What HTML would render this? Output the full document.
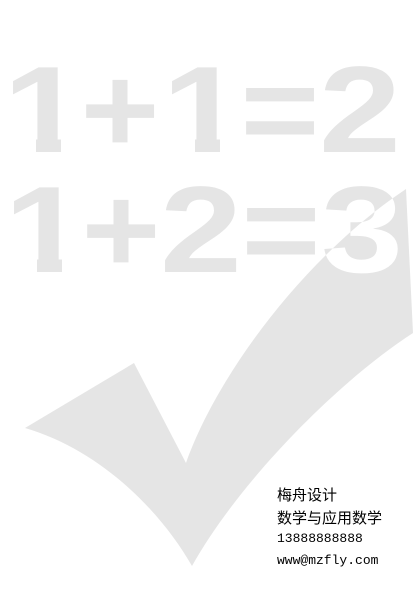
<!DOCTYPE html>
<html><head><meta charset="utf-8"><style>
html,body{margin:0;padding:0;background:#fff;}
body{width:420px;height:600px;position:relative;overflow:hidden;}
svg{position:absolute;left:0;top:0;}
svg text{font-family:"Liberation Sans",Arial,sans-serif;font-weight:bold;font-size:123px;}
.t{position:absolute;left:277px;color:#000;white-space:nowrap;}
.c{font-family:"Liberation Sans","Noto Sans CJK SC",sans-serif;font-size:15px;}
.m{font-family:"Liberation Mono",monospace;font-size:13px;}
</style></head><body>
<svg width="420" height="600" viewBox="0 0 420 600">
<defs>
<clipPath id="ck"><path d="M25,428 L134,363 L186,463 C215,380 300,260 406,189 L413,333 C340,380 240,480 192,566 C160,510 100,450 25,428 Z"/></clipPath>
<clipPath id="o1"><path d="M8,55 L61,55 L61,153 L36,153 L36,115 L8,115 Z"/></clipPath>
<clipPath id="o2"><path d="M168,55 L220,55 L220,153 L195,153 L195,115 L168,115 Z"/></clipPath>
<clipPath id="o3"><path d="M9,175 L62,175 L62,273 L37,273 L37,235 L9,235 Z"/></clipPath>
</defs>
<g fill="#e5e5e5" text-anchor="middle">
<g clip-path="url(#o1)"><text transform="translate(44,152) scale(1.2,1)">1</text></g>
<text transform="translate(120,152) scale(1.1,1)">+</text>
<g clip-path="url(#o2)"><text transform="translate(203,152) scale(1.2,1)">1</text></g>
<text transform="translate(280,152) scale(1.1,1)">=</text>
<text transform="translate(360,152) scale(1.2,1)">2</text>
<g clip-path="url(#o3)"><text transform="translate(45,272) scale(1.2,1)">1</text></g>
<text transform="translate(121,272) scale(1.1,1)">+</text>
<text transform="translate(201,272) scale(1.2,1)">2</text>
<text transform="translate(281,272) scale(1.1,1)">=</text>
<text transform="translate(362,272) scale(1.2,1)">3</text>
</g>
<path d="M25,428 L134,363 L186,463 C215,380 300,260 406,189 L413,333 C340,380 240,480 192,566 C160,510 100,450 25,428 Z" fill="#e5e5e5"/>
<g clip-path="url(#ck)" fill="#fff" text-anchor="middle">
<text transform="translate(362,272) scale(1.2,1)">3</text>
</g>
</svg>
<div class="t c" style="top:484px;">梅舟设计</div>
<div class="t c" style="top:507px;">数学与应用数学</div>
<div class="t m" style="top:531px;">13888888888</div>
<div class="t m" style="top:553px;">www@mzfly.com</div>
</body></html>
